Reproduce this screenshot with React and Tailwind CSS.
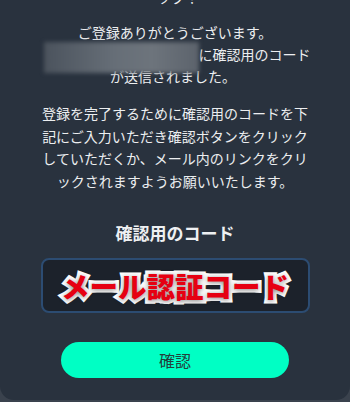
export default function App() {
  return (
    <div className="w-[350px] h-[402px] overflow-hidden bg-[#3a424d] font-['Noto_Sans_CJK_JP','Noto_Sans',sans-serif]">
      <div className="h-[400px] bg-[#29323e] rounded-b-[14px] flex flex-col items-center text-[#eceef0] overflow-hidden">
        <div className="-mt-[13px] h-[20px] text-[14px] leading-[20px] pl-[6px]">ップ！</div>
        <div className="mt-[14px] w-[290px] text-center text-[14px] leading-[22px]">
          <div>ご登録ありがとうございます。</div>
          <div className="flex justify-center pl-[4px]">
            <span className="relative inline-block w-[155px] h-[22px]">
              <span className="absolute left-0 top-[-1px] w-[155px] h-[31px] bg-[linear-gradient(90deg,#4b535d_0%,#666e77_45%,#6d747c_70%,#5c636c_100%)] blur-[2px]"></span>
            </span>
            <span>に確認用のコード</span>
          </div>
          <div className="pr-[4px]">が送信されました。</div>
        </div>
        <div className="mt-[15px] w-[276px] text-center text-[14px] leading-[22.6px]">
          登録を完了するために確認用のコードを下記にご入力いただき確認ボタンをクリックしていただくか、メール内のリンクをクリックされますようお願いいたします。
        </div>
        <div className="mt-[29px] text-[17px] leading-[24px] font-bold text-[#eef0f2]">確認用のコード</div>
        <div className="mt-[13px] w-[269px] h-[55px] rounded-[8px] border-2 border-[#2c4c72] bg-[#1c222b] flex items-center justify-center">
          <span className="text-[28.5px] leading-[36px] font-black text-[#e60012] tracking-[0px] [-webkit-text-stroke:7px_#ffffff] [paint-order:stroke_fill] [text-shadow:0_1px_5px_rgba(0,0,0,0.5)]">
            メール認証コード
          </span>
        </div>
        <button className="mt-[29px] w-[228px] h-[36px] rounded-full bg-[#00ffc4] text-[#24403c] text-[16px] leading-[36px]">
          確認
        </button>
      </div>
    </div>
  );
}
